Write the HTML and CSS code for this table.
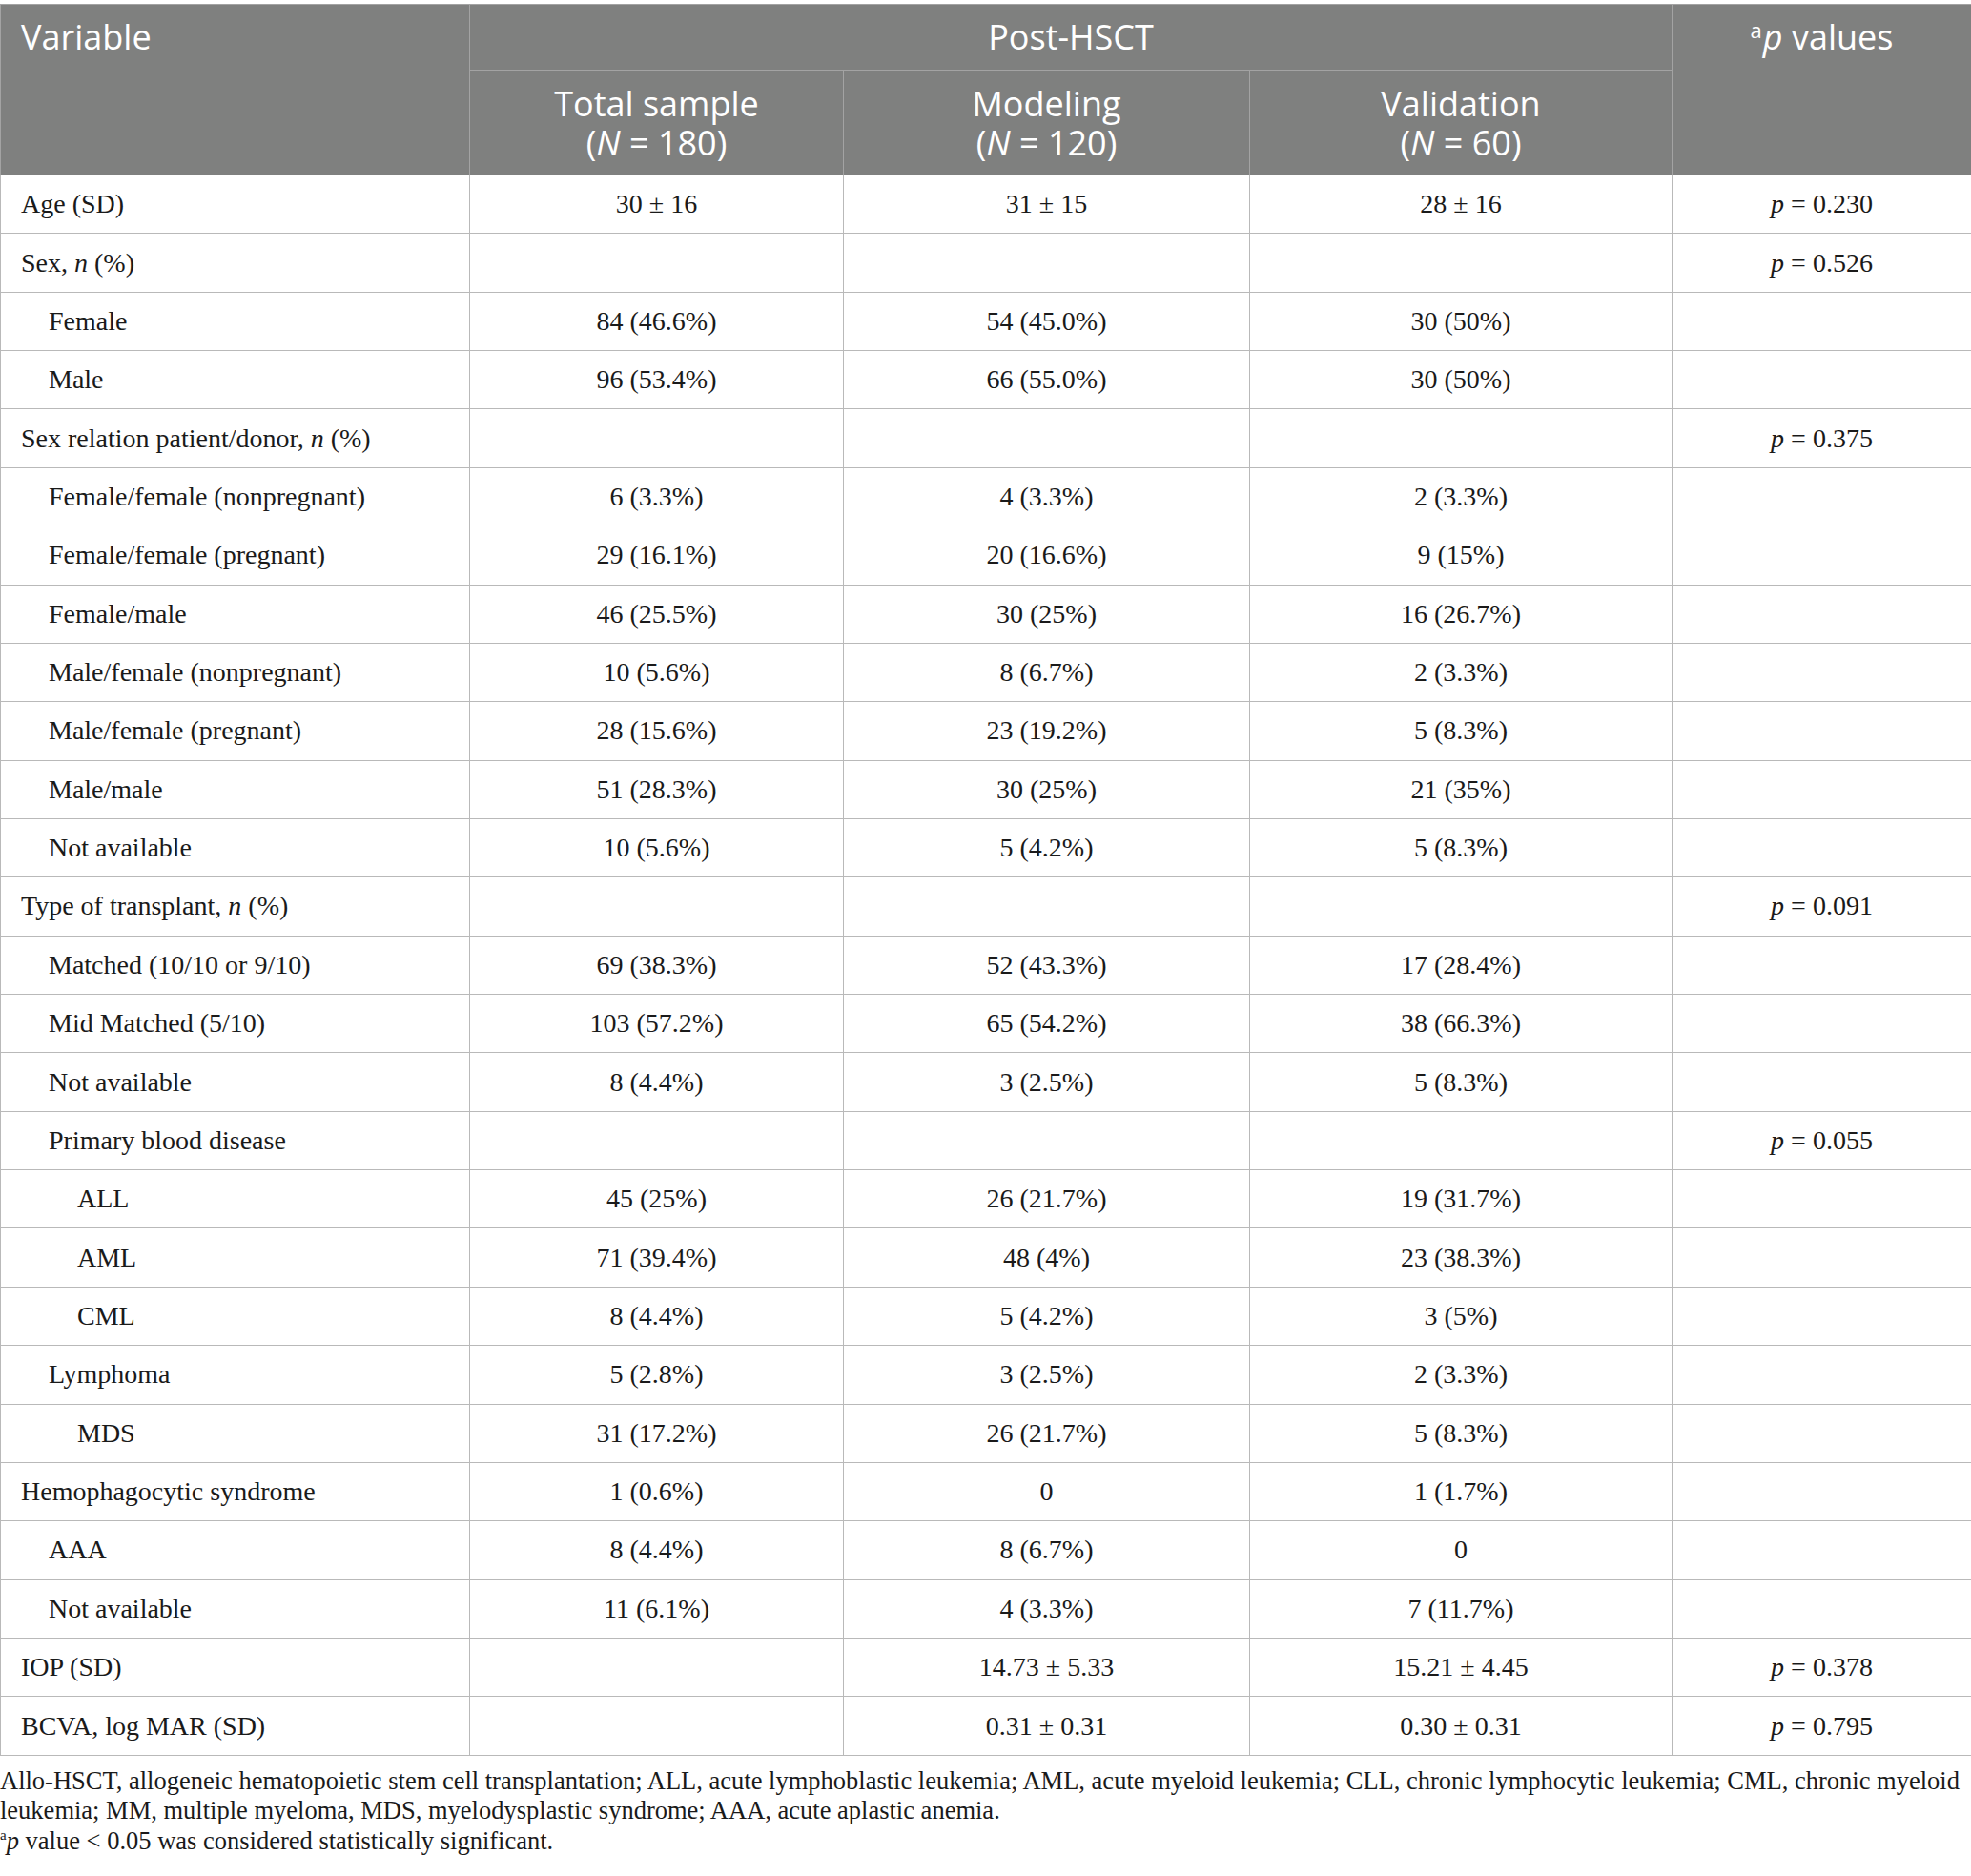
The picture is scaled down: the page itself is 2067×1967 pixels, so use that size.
FILE: index.html
```html
<!DOCTYPE html>
<html lang="en">
<head>
<meta charset="utf-8">
<title>Table</title>
<link rel="stylesheet" href="styles.css">
</head>
<body>
<div class="page">
<table class="data">
  <colgroup>
    <col class="c1"><col class="c2"><col class="c3"><col class="c4"><col class="c5">
  </colgroup>
  <thead>
    <tr class="h1">
      <th rowspan="2" class="left">Variable</th>
      <th colspan="3">Post-HSCT</th>
      <th rowspan="2"><sup class="sa">a</sup><i>p</i> values</th>
    </tr>
    <tr class="h2">
      <th><span class="hl">Total sample</span><span class="hl">(<i>N</i> = 180)</span></th>
      <th><span class="hl">Modeling</span><span class="hl">(<i>N</i> = 120)</span></th>
      <th><span class="hl">Validation</span><span class="hl">(<i>N</i> = 60)</span></th>
    </tr>
  </thead>
  <tbody>
    <tr><td>Age (SD)</td><td>30 ± 16</td><td>31 ± 15</td><td>28 ± 16</td><td><i>p</i> = 0.230</td></tr>
    <tr><td>Sex, <i>n</i> (%)</td><td></td><td></td><td></td><td><i>p</i> = 0.526</td></tr>
    <tr><td class="l1">Female</td><td>84 (46.6%)</td><td>54 (45.0%)</td><td>30 (50%)</td><td></td></tr>
    <tr><td class="l1">Male</td><td>96 (53.4%)</td><td>66 (55.0%)</td><td>30 (50%)</td><td></td></tr>
    <tr><td>Sex relation patient/donor, <i>n</i> (%)</td><td></td><td></td><td></td><td><i>p</i> = 0.375</td></tr>
    <tr><td class="l1">Female/female (nonpregnant)</td><td>6 (3.3%)</td><td>4 (3.3%)</td><td>2 (3.3%)</td><td></td></tr>
    <tr><td class="l1">Female/female (pregnant)</td><td>29 (16.1%)</td><td>20 (16.6%)</td><td>9 (15%)</td><td></td></tr>
    <tr><td class="l1">Female/male</td><td>46 (25.5%)</td><td>30 (25%)</td><td>16 (26.7%)</td><td></td></tr>
    <tr><td class="l1">Male/female (nonpregnant)</td><td>10 (5.6%)</td><td>8 (6.7%)</td><td>2 (3.3%)</td><td></td></tr>
    <tr><td class="l1">Male/female (pregnant)</td><td>28 (15.6%)</td><td>23 (19.2%)</td><td>5 (8.3%)</td><td></td></tr>
    <tr><td class="l1">Male/male</td><td>51 (28.3%)</td><td>30 (25%)</td><td>21 (35%)</td><td></td></tr>
    <tr><td class="l1">Not available</td><td>10 (5.6%)</td><td>5 (4.2%)</td><td>5 (8.3%)</td><td></td></tr>
    <tr><td>Type of transplant, <i>n</i> (%)</td><td></td><td></td><td></td><td><i>p</i> = 0.091</td></tr>
    <tr><td class="l1">Matched (10/10 or 9/10)</td><td>69 (38.3%)</td><td>52 (43.3%)</td><td>17 (28.4%)</td><td></td></tr>
    <tr><td class="l1">Mid Matched (5/10)</td><td>103 (57.2%)</td><td>65 (54.2%)</td><td>38 (66.3%)</td><td></td></tr>
    <tr><td class="l1">Not available</td><td>8 (4.4%)</td><td>3 (2.5%)</td><td>5 (8.3%)</td><td></td></tr>
    <tr><td class="l1">Primary blood disease</td><td></td><td></td><td></td><td><i>p</i> = 0.055</td></tr>
    <tr><td class="l2">ALL</td><td>45 (25%)</td><td>26 (21.7%)</td><td>19 (31.7%)</td><td></td></tr>
    <tr><td class="l2">AML</td><td>71 (39.4%)</td><td>48 (4%)</td><td>23 (38.3%)</td><td></td></tr>
    <tr><td class="l2">CML</td><td>8 (4.4%)</td><td>5 (4.2%)</td><td>3 (5%)</td><td></td></tr>
    <tr><td class="l1">Lymphoma</td><td>5 (2.8%)</td><td>3 (2.5%)</td><td>2 (3.3%)</td><td></td></tr>
    <tr><td class="l2">MDS</td><td>31 (17.2%)</td><td>26 (21.7%)</td><td>5 (8.3%)</td><td></td></tr>
    <tr><td>Hemophagocytic syndrome</td><td>1 (0.6%)</td><td>0</td><td>1 (1.7%)</td><td></td></tr>
    <tr><td class="l1">AAA</td><td>8 (4.4%)</td><td>8 (6.7%)</td><td>0</td><td></td></tr>
    <tr><td class="l1">Not available</td><td>11 (6.1%)</td><td>4 (3.3%)</td><td>7 (11.7%)</td><td></td></tr>
    <tr><td>IOP (SD)</td><td></td><td>14.73 ± 5.33</td><td>15.21 ± 4.45</td><td><i>p</i> = 0.378</td></tr>
    <tr><td>BCVA, log MAR (SD)</td><td></td><td>0.31 ± 0.31</td><td>0.30 ± 0.31</td><td><i>p</i> = 0.795</td></tr>
  </tbody>
</table>
<div class="notes">
  <p>Allo-HSCT, allogeneic hematopoietic stem cell transplantation; ALL, acute lymphoblastic leukemia; AML, acute myeloid leukemia; CLL, chronic lymphocytic leukemia; CML, chronic myeloid leukemia; MM, multiple myeloma, MDS, myelodysplastic syndrome; AAA, acute aplastic anemia.</p>
  <p><sup class="fa">a</sup><i>p</i> value &lt; 0.05 was considered statistically significant.</p>
</div>
</div>
</body>
</html>
```

FILE: styles.css
```css
html, body {
  margin: 0;
  padding: 0;
  background: #ffffff;
}

.page {
  width: 2067px;
  padding-top: 4px;
}

.data {
  width: 2067px;
  border-collapse: collapse;
  table-layout: fixed;
  border: 1px solid #b4b4b4;
}

.c1 { width: 492px; }
.c2 { width: 392px; }
.c3 { width: 426px; }
.c4 { width: 443px; }
.c5 { width: 314px; }

.data th {
  background: #7f807f;
  color: #ffffff;
  font-family: "Open Sans", "Noto Sans", sans-serif;
  font-weight: 400;
  font-size: 36px;
  line-height: 41px;
  padding: 13px 21px 14px;
  text-align: center;
  vertical-align: top;
  border: 1px solid #a3a3a3;
}

.data th.left {
  text-align: left;
}

.data tr.h2 th {
  padding-top: 14px;
  padding-bottom: 13px;
}

.hl {
  display: block;
  height: 41px;
  line-height: 41px;
}

.sa {
  font-size: 22px;
  line-height: 0;
  vertical-align: 12px;
  margin-right: 1px;
}

.data td {
  font-family: "Liberation Serif", "Times New Roman", serif;
  font-size: 28px;
  color: #1a1a1a;
  height: 60.37px;
  padding: 0 21px;
  text-align: center;
  vertical-align: middle;
  border: 1px solid #b9b9b9;
  white-space: nowrap;
}

.data td:first-child {
  text-align: left;
}

.data td.l1 {
  padding-left: 50px;
}

.data td.l2 {
  padding-left: 80px;
}

.notes {
  font-family: "Liberation Serif", "Times New Roman", serif;
  font-size: 26.5px;
  line-height: 31.5px;
  color: #1a1a1a;
  padding-top: 11px;
}

.notes p {
  margin: 0;
}

.fa {
  font-size: 15px;
  line-height: 0;
  vertical-align: 10px;
}
```
